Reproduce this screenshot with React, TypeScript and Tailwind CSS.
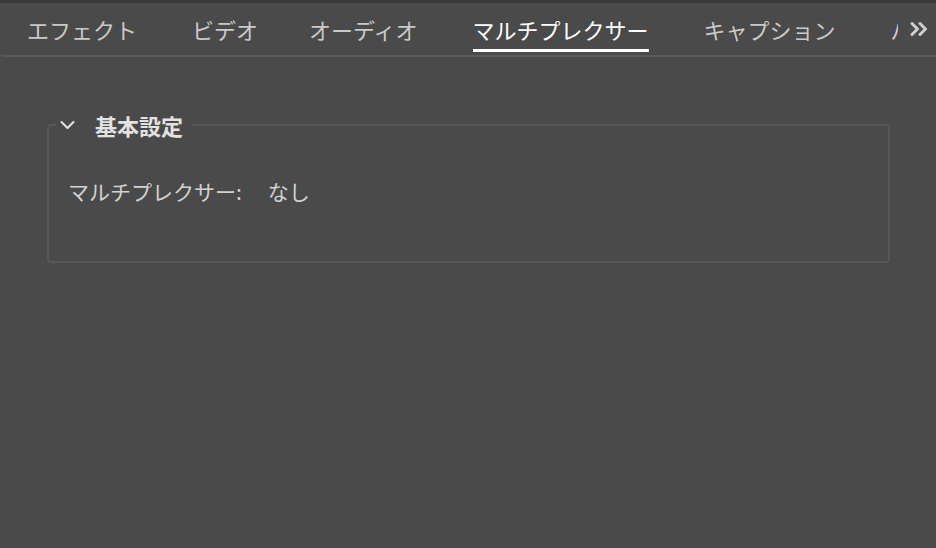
import React from "react";

const tabs = [
  { label: "エフェクト", cls: "" },
  { label: "ビデオ", cls: "ml-[55px]" },
  { label: "オーディオ", cls: "ml-[51px]" },
  { label: "マルチプレクサー", cls: "ml-[55px]" },
  { label: "キャプション", cls: "ml-[55px]" },
  { label: "パブリッシュ", cls: "ml-[55px]" },
];
const active = 3;

export default function App() {
  return (
    <div
      className="w-[936px] h-[548px] bg-[#4a4a4a] overflow-hidden"
      style={{ fontFamily: '"Noto Sans CJK JP", "Noto Sans", sans-serif' }}
    >
      <div className="h-[3px] bg-[#3b3b3b]" />
      <div className="relative h-[54px] border-b-2 border-[#5a5a5a] rounded-bl-[4px] bg-[#4a4a4a]">
        <div className="flex h-full pl-[27px] overflow-hidden w-[898px]">
          {tabs.map((t, i) => (
            <div key={t.label} className={"relative h-full flex items-center shrink-0 " + t.cls}>
              <span
                className={
                  "text-[22px] leading-none whitespace-nowrap " +
                  (i === active ? "text-white" : "text-[#c9c9c9]")
                }
              >
                {t.label}
              </span>
              {i === active && (
                <div className="absolute left-0 right-0 bottom-[3px] h-[3px] bg-white" />
              )}
            </div>
          ))}
        </div>
        <div className="absolute right-0 top-0 h-full w-[36px] bg-[#4a4a4a] flex items-start pt-[18px] pl-[10px]">
          <svg width="20" height="16" viewBox="0 0 20 16" fill="none">
            <path
              d="M2 2.5 L7.5 8 L2 13.5 M10 2.5 L15.5 8 L10 13.5"
              stroke="#cfcfcf"
              strokeWidth="3"
              strokeLinecap="round"
              strokeLinejoin="round"
            />
          </svg>
        </div>
      </div>

      <fieldset className="mx-[47px] mt-[55px] w-[843px] h-[151px] border-2 border-[#575757] rounded-[4px] px-[19px] pt-[43px] m-0 min-w-0">
        <legend className="ml-[-12px] pl-[4px] pr-[10px] flex items-center gap-[20px] text-[#e2e2e2]">
          <svg width="15" height="10" viewBox="0 0 15 10" fill="none">
            <path d="M1.5 2 L7.5 8 L13.5 2" stroke="#e6e6e6" strokeWidth="2" strokeLinecap="round" strokeLinejoin="round" />
          </svg>
          <span className="text-[22px] font-bold leading-[26px]">基本設定</span>
        </legend>
        <div className="flex items-center text-[21px] leading-none text-[#d2d2d2]">
          <span>マルチプレクサー:</span>
          <span className="ml-[26px]">なし</span>
        </div>
      </fieldset>
    </div>
  );
}
